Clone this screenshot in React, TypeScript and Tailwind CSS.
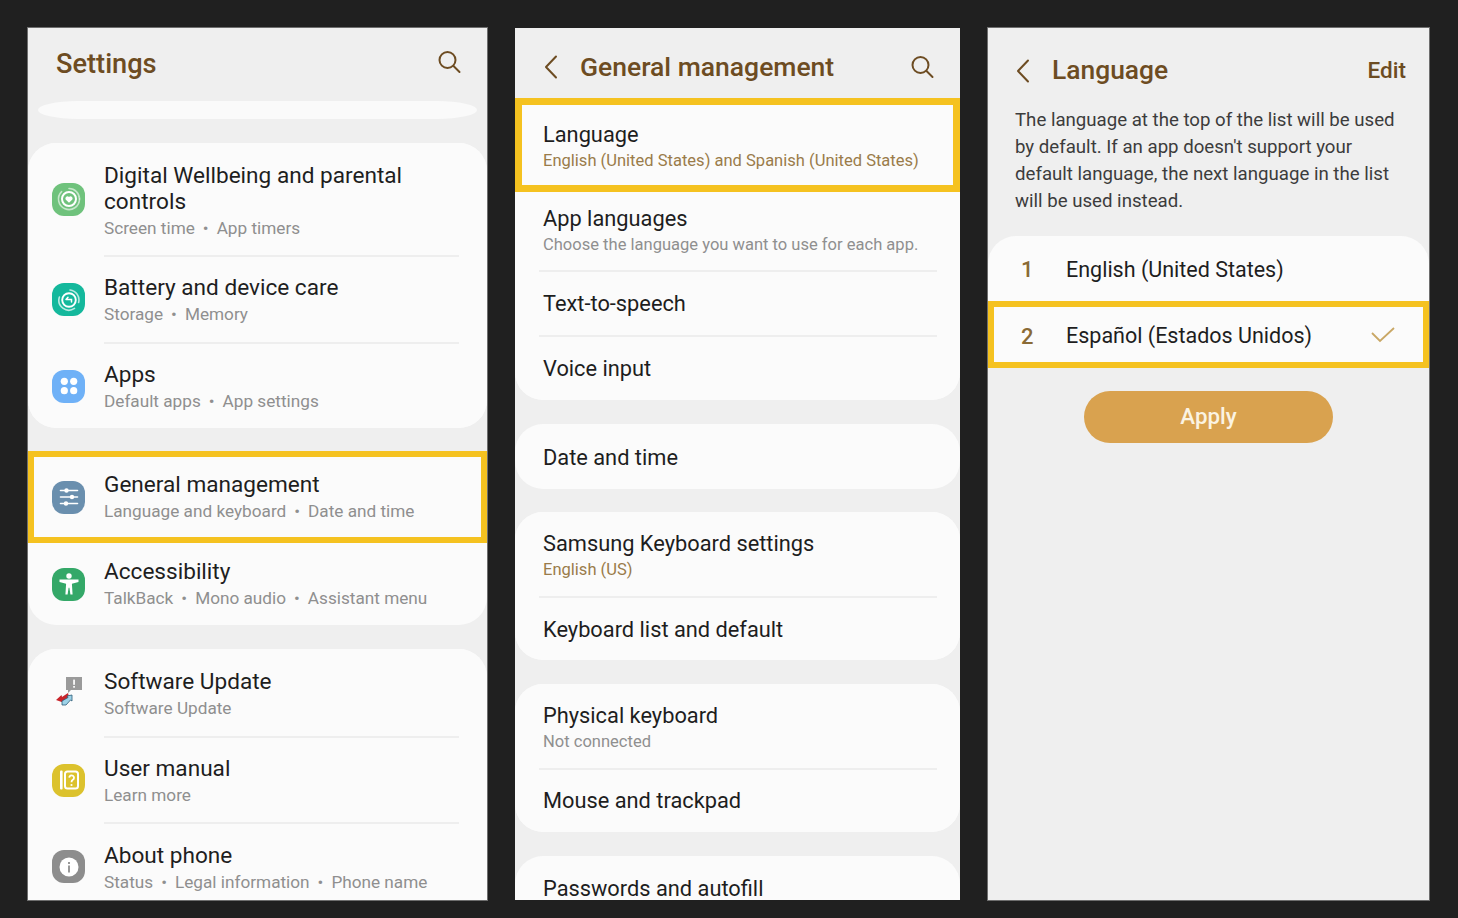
import React from "react";

const Sep = ({ l = 76, r = 28 }: { l?: number; r?: number }) => (
  <div className="h-[2px] bg-[#eeeeee]" style={{ marginLeft: l, marginRight: r }} />
);

const Squircle = ({ color, children }: { color: string; children: React.ReactNode }) => (
  <div className="w-[33px] h-[33px] rounded-[12px] flex items-center justify-center shrink-0" style={{ background: color }}>
    {children}
  </div>
);

const Dot = () => <span className="mx-[8px] text-[#8f8f8f]">•</span>;

function SetRow({ icon, title, subs, h, hl, dy = 0 }: { icon: React.ReactNode; title: React.ReactNode; subs: string[]; h: number; hl?: boolean; dy?: number }) {
  return (
    <div className={`flex items-center bg-[#fbfbfb] ${hl ? "border-[6px] border-[#f5c220] pl-[18px]" : "pl-[24px]"}`} style={{ height: h }}>
      {icon}
      <div className="ml-[19px]" style={{ marginTop: dy * 2 }}>
        <div className="text-[22.6px] leading-[26px] text-[#1e1e1e]">{title}</div>
        <div className="text-[17.2px] leading-[24px] mt-[1px] text-[#8f8f8f]">
          {subs.map((s, i) => (
            <React.Fragment key={s}>
              {i > 0 && <Dot />}
              {s}
            </React.Fragment>
          ))}
        </div>
      </div>
    </div>
  );
}

function GenRow({ title, sub, h, gold, hl, dy = 0 }: { title: string; sub?: string; h: number; gold?: boolean; hl?: boolean; dy?: number }) {
  return (
    <div className={`flex flex-col justify-center bg-[#fbfbfb] ${hl ? "border-[7px] border-[#f5c220] pl-[21px]" : "pl-[28px]"}`} style={{ height: h }}>
      <div className="text-[21.8px] leading-[28px] text-[#1e1e1e]" style={{ marginTop: dy * 2 }}>{title}</div>
      {sub && <div className={`text-[16.55px] leading-[22px] mt-[1px] ${gold ? "text-[#9a7b4a]" : "text-[#8f8f8f]"}`}>{sub}</div>}
    </div>
  );
}

const Search = () => (
  <svg width="26" height="26" viewBox="0 0 26 26" fill="none" stroke="#6d4c22" strokeWidth="2" strokeLinecap="round">
    <circle cx="11.5" cy="11" r="8" />
    <path d="M17.5 17l6 6" />
  </svg>
);

const Back = () => (
  <svg width="16" height="26" viewBox="0 0 16 26" fill="none" stroke="#6d4c22" strokeWidth="2" strokeLinecap="round" strokeLinejoin="round">
    <path d="M13 2.5L3 13l10 10.5" />
  </svg>
);

const Card = ({ children }: { children: React.ReactNode }) => (
  <div className="bg-[#fbfbfb] rounded-[28px] overflow-hidden">{children}</div>
);

export default function App() {
  return (
    <div className="w-[1458px] h-[918px] bg-[#202020] overflow-hidden flex gap-[28px] pt-[28px] pl-[28px]" style={{ fontFamily: "Roboto, sans-serif" }}>
      {/* Panel 1 */}
      <div className="w-[459px] h-[872px] bg-[#efefef] overflow-hidden shrink-0 outline outline-1 outline-[#6e6e6e]">
        <div className="h-[73px] flex items-center justify-between pl-[28px] pr-[25px]">
          <span className="text-[27.2px] font-medium text-[#6d4c22]">Settings</span>
          <div className="-mt-[6px]"><Search /></div>
        </div>
        <div className="h-[18px] mx-[10px] rounded-[40px/9px] bg-[#fafafa]" />
        <div className="mt-[24px]">
          <Card>
            <SetRow
              h={112}
              dy={2}
              icon={
                <Squircle color="#6fc27c">
                  <svg width="26" height="26" viewBox="0 0 26 26" fill="none" stroke="#fff" strokeLinecap="round">
                    <path d="M13 2.500a10.500 10.500 0 0 1 10.500 10.500" strokeWidth="1.6" opacity="0.6" />
                    <path d="M23.500 13A10.500 10.500 0 1 1 5.600 5.600" strokeWidth="1.6" opacity="0.6" />
                    <circle cx="13" cy="13" r="7" strokeWidth="2" />
                    <path d="M13 16.800l-3.400-3.400a2.100 2.100 0 0 1 3.400-2.400 2.100 2.100 0 0 1 3.400 2.400z" fill="#fff" stroke="none" />
                  </svg>
                </Squircle>
              }
              title={<>Digital Wellbeing and parental<br />controls</>}
              subs={["Screen time", "App timers"]}
            />
            <Sep />
            <SetRow
              h={85}
              dy={1}
              icon={
                <Squircle color="#14b89c">
                  <svg width="26" height="26" viewBox="0 0 26 26" fill="none" stroke="#fff" strokeLinecap="round">
                    <path d="M14 3a10 10 0 0 1 8.600 12.500M18.500 21.400A10 10 0 0 1 3.400 10" strokeWidth="1.600" opacity="0.7" />
                    <circle cx="13" cy="13" r="6.800" strokeWidth="1.900" />
                    <path d="M10 12.400h5.500v2.600M12 10.200l-2 2.200" strokeWidth="1.500" />
                  </svg>
                </Squircle>
              }
              title="Battery and device care"
              subs={["Storage", "Memory"]}
            />
            <Sep />
            <SetRow
              h={84}
              dy={1}
              icon={
                <Squircle color="#6fb1f7">
                  <svg width="22" height="22" viewBox="0 0 22 22" fill="#fff">
                    <circle cx="6.300" cy="6.300" r="3.600" />
                    <circle cx="15.700" cy="6.300" r="3.600" />
                    <circle cx="6.300" cy="15.700" r="3.600" />
                    <circle cx="15.700" cy="15.700" r="3.600" />
                  </svg>
                </Squircle>
              }
              title="Apps"
              subs={["Default apps", "App settings"]}
            />
          </Card>
        </div>
        <div className="mt-[23px]">
          <SetRow
            h={92}
            hl
            icon={
              <Squircle color="#6a8fae">
                <svg width="24" height="24" viewBox="0 0 24 24" fill="#fff" stroke="#fff" strokeWidth="1.6" strokeLinecap="round">
                  <path d="M3.500 5.500h17M3.500 12h17M3.500 18.500h17" />
                  <circle cx="9.500" cy="5.500" r="1.400" />
                  <circle cx="15" cy="12" r="1.400" />
                  <circle cx="9" cy="18.500" r="1.400" />
                </svg>
              </Squircle>
            }
            title="General management"
            subs={["Language and keyboard", "Date and time"]}
          />
          <div className="bg-[#fbfbfb] rounded-b-[28px] overflow-hidden">
            <SetRow
              h={82}
              icon={
                <Squircle color="#34a868">
                  <svg width="26" height="26" viewBox="0 0 26 26" fill="#fff">
                    <circle cx="13" cy="5" r="2.700" />
                    <path d="M3.500 8.600h19v2.300l-6.600 1.800.7 10.800h-2.200l-1-6.700h-.8l-1 6.700H9.400l.7-10.800-6.600-1.800z" />
                  </svg>
                </Squircle>
              }
              title="Accessibility"
              subs={["TalkBack", "Mono audio", "Assistant menu"]}
            />
          </div>
        </div>
        <div className="mt-[24px] bg-[#fbfbfb] rounded-t-[28px] h-[300px] overflow-hidden">
          <SetRow
            h={87}
            dy={1.5}
            icon={
              <div className="w-[33px] h-[33px] shrink-0 -mt-[1px]">
                <svg width="33" height="33" viewBox="0 0 33 33">
                  <path d="M14 1h16v13H19l-3 3v-3h-2z" fill="#9a9a9a" />
                  <rect x="21.200" y="3.600" width="1.700" height="5.200" fill="#fff" />
                  <rect x="21.200" y="10" width="1.700" height="1.700" fill="#fff" />
                  <path d="M4 24l5.500-5 .5 2 6-4 1 4-5 4 .5 2z" fill="#c9252b" />
                  <path d="M10 29v-4l6-3.500-1-1.500 5-1v6l-1.500-1L14 29z" fill="#9ed3e8" stroke="#2d5d78" strokeWidth="0.8" />
                </svg>
              </div>
            }
            title="Software Update"
            subs={["Software Update"]}
          />
          <Sep />
          <SetRow
            h={84}
            dy={1}
            icon={
              <Squircle color="#dcc22d">
                <svg width="24" height="24" viewBox="0 0 24 24" fill="none" stroke="#fff">
                  <rect x="3" y="2.500" width="2.600" height="19" rx="1" fill="#fff" stroke="none" />
                  <rect x="8" y="3.500" width="13" height="17" rx="2.500" strokeWidth="2" />
                  <path d="M12.200 9.600a2.400 2.400 0 1 1 3.600 2.200c-1 .6-1.300 1.200-1.300 2.400" strokeWidth="1.800" />
                  <circle cx="14.500" cy="17" r="1.100" fill="#fff" stroke="none" />
                </svg>
              </Squircle>
            }
            title="User manual"
            subs={["Learn more"]}
          />
          <Sep />
          <SetRow
            h={85}
            dy={1.5}
            icon={
              <Squircle color="#8d8d8d">
                <svg width="22" height="22" viewBox="0 0 22 22">
                  <circle cx="11" cy="11" r="9.500" fill="#fff" />
                  <rect x="10.100" y="9.500" width="1.800" height="7" fill="#8d8d8d" />
                  <rect x="10.100" y="6" width="1.800" height="2" fill="#8d8d8d" />
                </svg>
              </Squircle>
            }
            title="About phone"
            subs={["Status", "Legal information", "Phone name"]}
          />
        </div>
      </div>

      {/* Panel 2 */}
      <div className="w-[445px] h-[872px] bg-[#efefef] overflow-hidden shrink-0">
        <div className="h-[70px] flex items-center pl-[28px] pr-[25px] pt-[8px]">
          <Back />
          <span className="ml-[21px] text-[26.5px] font-medium text-[#6d4c22] flex-1">General management</span>
          <Search />
        </div>
        <GenRow h={94} hl title="Language" sub="English (United States) and Spanish (United States)" gold dy={1} />
        <div className="bg-[#fbfbfb] rounded-b-[28px] overflow-hidden">
          <GenRow h={78} title="App languages" sub="Choose the language you want to use for each app." dy={-1} />
          <Sep l={24} r={23} />
          <GenRow h={63} title="Text-to-speech" />
          <Sep l={24} r={23} />
          <GenRow h={63} title="Voice input" />
        </div>
        <div className="mt-[24px]">
          <Card>
            <GenRow h={65} title="Date and time" dy={1} />
          </Card>
        </div>
        <div className="mt-[23px]">
          <Card>
            <GenRow h={84} title="Samsung Keyboard settings" sub="English (US)" gold dy={1} />
            <Sep l={24} r={23} />
            <GenRow h={62} title="Keyboard list and default" dy={0.5} />
          </Card>
        </div>
        <div className="mt-[24px]">
          <Card>
            <GenRow h={84} title="Physical keyboard" sub="Not connected" dy={1} />
            <Sep l={24} r={23} />
            <GenRow h={62} title="Mouse and trackpad" />
          </Card>
        </div>
        <div className="mt-[24px] bg-[#fbfbfb] rounded-t-[28px] h-[80px] overflow-hidden pl-[28px] pt-[22px] text-[21.8px] leading-[22px] text-[#1e1e1e]">
          Passwords and autofill
        </div>
      </div>

      {/* Panel 3 */}
      <div className="w-[441px] h-[872px] bg-[#efefef] overflow-hidden shrink-0 outline outline-1 outline-[#6e6e6e]">
        <div className="h-[79px] flex items-center pl-[27px] pr-[23px] pt-[6px]">
          <Back />
          <span className="ml-[21px] text-[26.4px] font-medium text-[#6d4c22] flex-1">Language</span>
          <span className="text-[22.5px] font-medium text-[#6d4c22]">Edit</span>
        </div>
        <p className="px-[27px] text-[18.65px] leading-[27px] text-[#3c3c3c] whitespace-nowrap">
          The language at the top of the list will be used
          <br />
          by default. If an app doesn't support your
          <br />
          default language, the next language in the list
          <br />
          will be used instead.
        </p>
        <div className="mt-[21px] bg-[#fbfbfb] rounded-t-[28px] h-[65px] flex items-center pl-[33px]">
          <span className="w-[45px] text-[22px] font-medium text-[#8a6a35] mt-[2px]">1</span>
          <span className="text-[21.5px] text-[#1e1e1e] mt-[3px]">English (United States)</span>
        </div>
        <div className="h-[67px] border-[6px] border-[#f5c220] bg-[#fbfbfb] flex items-center pl-[27px] pr-[28px]">
          <span className="w-[45px] text-[22px] font-medium text-[#8a6a35] mt-[3px]">2</span>
          <span className="text-[21.5px] text-[#1e1e1e] flex-1 mt-[4px]">Español (Estados Unidos)</span>
          <svg className="mt-[1px]" width="24" height="16" viewBox="0 0 24 16" fill="none" stroke="#c9a765" strokeWidth="1.8">
            <path d="M1 6l8 8L23 1" />
          </svg>
        </div>
        <div className="mt-[23px] flex justify-center">
          <div className="w-[249px] h-[52px] rounded-full bg-[#d9a24f] flex items-center justify-center text-[22.3px] font-medium text-[#fbf3e2]">
            Apply
          </div>
        </div>
      </div>
    </div>
  );
}
